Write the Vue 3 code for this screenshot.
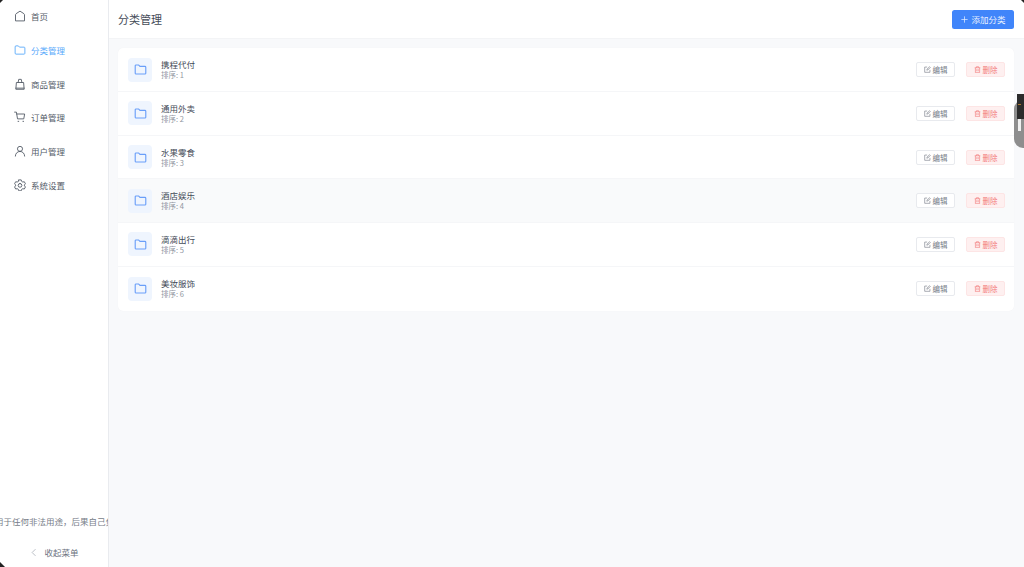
<script setup>
const menu = [
  { label: '首页', icon: 'home' },
  { label: '分类管理', icon: 'folder', active: true },
  { label: '商品管理', icon: 'bag' },
  { label: '订单管理', icon: 'cart' },
  { label: '用户管理', icon: 'user' },
  { label: '系统设置', icon: 'gear' },
]
const paths = {
  home: 'M2 14V6.500C2 5.800 2.300 5.300 2.800 4.900L8 1.500l5.200 3.400c.5.400.8.900.8 1.600V14z',
  folder: 'M1.500 3.500c0-.6.400-1 1-1h3.300l1.500 1.700h6.200c.6 0 1 .4 1 1v7.300c0 .6-.4 1-1 1h-11c-.6 0-1-.4-1-1z',
  bag: 'M2.500 14.500l.7-8.500h9.600l.7 8.500zM5.500 6l.8-4.200h3.400l.8 4.200M2.500 13.500h11',
  cart: 'M.8 1.500h2.400l1.500 9h8.300l1.200-6.500H3.600M5.400 13.800h.9M11.900 13.800h.9',
  user: 'M8 8.600a3.400 3.400 0 1 0 0-6.800 3.400 3.400 0 0 0 0 6.800zM1.800 14.800c0-3.500 2.700-6.200 6.200-6.200s6.200 2.700 6.200 6.200',
  gear: 'M6.400 1.200h3.200l.5 1.900 1.700 1 1.900-.5 1.600 2.800-1.400 1.400v1.400l1.400 1.400-1.600 2.800-1.900-.5-1.700 1-.5 1.900H6.400l-.5-1.900-1.700-1-1.900.5L.7 10.600l1.400-1.400V7.800L.7 6.400l1.600-2.800 1.900.5 1.700-1zM8 6a2.500 2.500 0 1 0 0 5 2.500 2.500 0 0 0 0-5z',
}
const categories = ['携程代付', '通用外卖', '水果零食', '酒店娱乐', '滴滴出行', '美妆服饰'].map((name, i) => ({
  name,
  order: i + 1,
  hover: i === 3,
}))
</script>

<template>
  <div class="layout">
    <aside class="side">
      <nav class="nav">
        <a v-for="m in menu" :key="m.label" class="nav-item" :class="{ active: m.active }">
          <svg class="nav-icon" viewBox="0 0 16 16" fill="none" stroke="currentColor" stroke-width="1.200" stroke-linejoin="round" stroke-linecap="round">
            <path :d="paths[m.icon]" />
          </svg>
          <span>{{ m.label }}</span>
        </a>
      </nav>
      <div class="notice">
        <span class="notice-text">用于任何非法用途，后果自己负责</span>
      </div>
      <div class="collapse">
        <svg class="chev" viewBox="0 0 8 12" fill="none" stroke="currentColor" stroke-width="1"><path d="M6 1.500L1.500 6 6 10.500" /></svg>
        <span>收起菜单</span>
      </div>
    </aside>
    <main class="main">
      <header class="head">
        <h1>分类管理</h1>
        <button class="add">
          <svg class="plus" viewBox="0 0 10 10" fill="none" stroke="currentColor" stroke-width="1"><path d="M5 .5v9M.5 5h9" /></svg>
          添加分类
        </button>
      </header>
      <section class="content">
        <div class="card">
          <div v-for="c in categories" :key="c.name" class="row" :class="{ hover: c.hover }">
            <div class="thumb">
              <svg class="thumb-icon" viewBox="0 0 16 16" fill="none" stroke="#6a9ff9" stroke-width="1.400" stroke-linejoin="round">
                <path :d="paths.folder" />
              </svg>
            </div>
            <div class="info">
              <div class="name">{{ c.name }}</div>
              <div class="order">排序: {{ c.order }}</div>
            </div>
            <div class="actions">
              <button class="btn edit">
                <svg class="btn-icon" viewBox="0 0 10 10" fill="none" stroke="currentColor" stroke-width=".9">
                  <path d="M8.500 5.500v3.500h-7.500v-7.500h3.500M4 6l.3-1.500L8 1l1 1-3.500 3.700z" />
                </svg>
                编辑
              </button>
              <button class="btn del">
                <svg class="btn-icon" viewBox="0 0 10 10" fill="none" stroke="currentColor" stroke-width=".9">
                  <path d="M1 2.500h8M3.500 2.500V1h3v1.500M2 2.500v7h6v-7M4 4.500v3M6 4.500v3" />
                </svg>
                删除
              </button>
            </div>
          </div>
        </div>
      </section>
    </main>
    <div class="float-tab"></div>
    <div class="float-dark"><i class="float-dot"></i></div>
    <i class="float-bar"></i>
    <i class="corner tl"></i>
    <i class="corner bl"></i>
    <i class="corner tr"></i>
  </div>
</template>

<style>
html, body { margin: 0; overflow: hidden; }
</style>

<style scoped>
.layout {
  position: relative;
  display: flex;
  width: 1024px;
  height: 567px;
  overflow: hidden;
  background: #f8f9fb;
  font-family: "Noto Sans CJK SC", "Noto Sans", sans-serif;
  color: #303133;
}
.side {
  width: 109px;
  box-sizing: border-box;
  flex: none;
  display: flex;
  flex-direction: column;
  background: #fff;
  border-right: 1px solid #e9ebef;
}
.nav { flex: 1; margin-top: -.6px; }
.nav-item {
  display: flex;
  align-items: center;
  height: 33.7px;
  padding-left: 14px;
  gap: 5px;
  font-size: 8.500px;
  color: #555c68;
}
.nav-item.active { color: #5aaafb; }
.nav-icon { width: 12px; height: 12px; flex: none; }
.notice {
  height: 20px;
  overflow: hidden;
  white-space: nowrap;
  display: flex;
  align-items: center;
  font-size: 8.500px;
  color: #777d88;
  margin-bottom: 7px;
}
.notice-text { flex: none; margin-left: -5px; }
.collapse {
  height: 28px;
  margin-bottom: 1px;
  padding-left: 2px;
  display: flex;
  align-items: center;
  justify-content: center;
  gap: 7px;
  font-size: 8.500px;
  color: #6b7280;
}
.chev { width: 6px; height: 9px; color: #a3a9b3; }
.main { flex: 1; min-width: 0; display: flex; flex-direction: column; }
.head {
  height: 39px;
  box-sizing: border-box;
  flex: none;
  display: flex;
  align-items: center;
  justify-content: space-between;
  padding: 0 10px 0 9px;
  background: #fff;
  border-bottom: 1px solid #f3f4f6;
}
.head h1 {
  margin: 0;
  font-size: 11px;
  font-weight: 400;
  color: #444b57;
}
.add {
  width: 62px;
  height: 19px;
  padding: 0 0 0 1px;
  box-sizing: border-box;
  border: 0;
  border-radius: 2.500px;
  background: #4085fa;
  color: #e8f1ff;
  font: inherit;
  font-size: 8.500px;
  display: flex;
  align-items: center;
  justify-content: center;
  gap: 3px;
}
.plus { width: 7px; height: 7px; }
.content { flex: 1; padding: 9.400px 10px 9px 9px; }
.card {
  background: #fff;
  border-radius: 5px;
  box-shadow: 0 0 1px rgba(0, 0, 0, .05);
  overflow: hidden;
}
.row {
  height: 43.7px;
  box-sizing: border-box;
  display: flex;
  align-items: center;
  padding: 0 9px 0 10px;
  border-bottom: 1px solid #f5f6f8;
}
.row:last-child { border-bottom: 0; }
.row.hover { background: #f9fafb; }
.thumb {
  width: 24px;
  height: 24px;
  border-radius: 4px;
  background: #eff5fe;
  display: flex;
  align-items: center;
  justify-content: center;
}
.thumb-icon { width: 13px; height: 13px; }
.info { margin-left: 9px; flex: 1; }
.name { font-size: 8.500px; line-height: 11px; color: #444b57; }
.order { font-size: 7.500px; line-height: 10px; color: #90969f; }
.actions { display: flex; gap: 11px; }
.btn {
  width: 39px;
  height: 15px;
  padding: 0;
  box-sizing: border-box;
  border-radius: 2px;
  font: inherit;
  font-size: 7.500px;
  display: flex;
  align-items: center;
  justify-content: center;
  gap: 2px;
}
.edit { background: #fff; border: 1px solid #e8eaee; color: #777d88; }
.del { background: #fef0f0; border: 1px solid #fde5e5; color: #f37b7b; }
.btn-icon { width: 7px; height: 7px; }
.float-tab {
  position: absolute;
  right: 0;
  top: 100px;
  width: 10px;
  height: 48px;
  background: #8e8e8e;
  border-radius: 9px 0 0 9px;
}
.float-dark { position: absolute; right: 0; top: 94px; width: 7px; height: 25px; background: #2c2c2c; }
.float-dot { position: absolute; left: 1px; top: 10px; width: 3px; height: 1px; background: #a8752e; }
.float-bar { position: absolute; right: 3px; top: 119px; width: 3px; height: 12px; background: #f0f0f0; }
.corner { position: absolute; width: 0; height: 0; }
.tl { left: 0; top: 0; border-top: 3px solid #222; border-right: 3px solid transparent; }
.bl { left: 0; bottom: 0; border-bottom: 5px solid #222; border-right: 5px solid transparent; }
.tr { right: 0; top: 0; border-top: 3px solid #222; border-left: 3px solid transparent; }
</style>
